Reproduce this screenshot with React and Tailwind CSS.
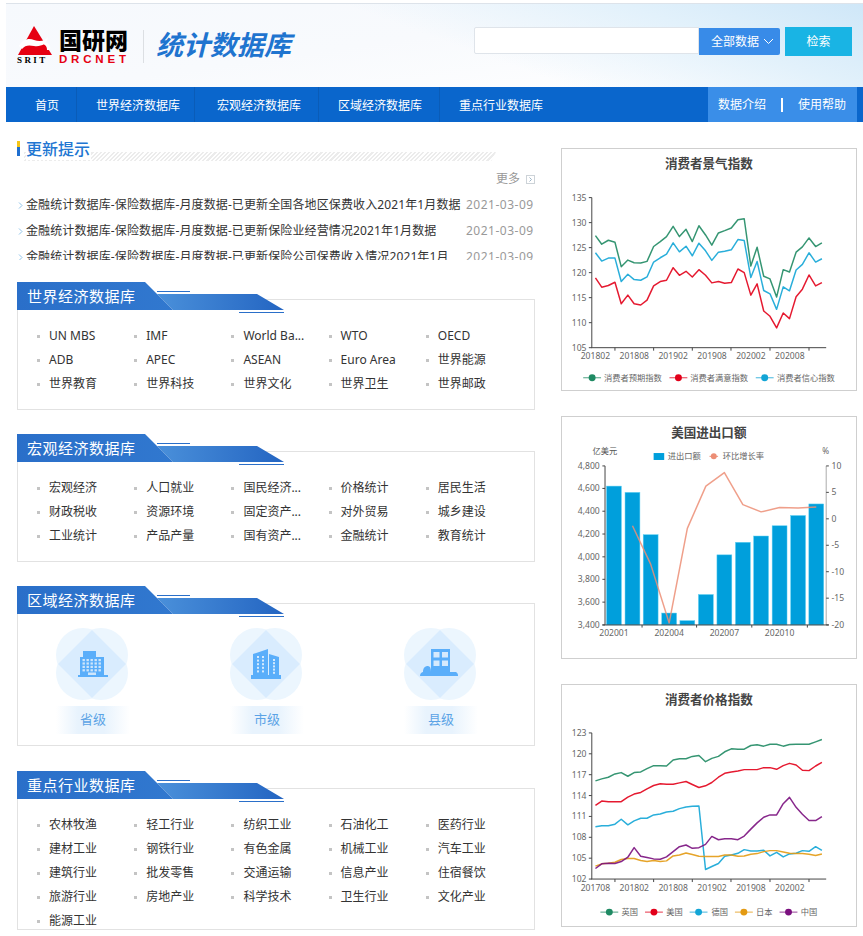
import React from "react";

const FONT = '"Noto Sans","Noto Sans CJK SC",sans-serif';

const xs36 = [119,138,158,178,197,217,236,256,275,295,315,334,354,373,393,412,432,452,471,491,510,530,550,569,589,608,628,647,667,687,706,726,745,765,785,804];
const toPts = (ys) => ys.map((y, i) => `${xs36[i]},${y}`).join(" ");

const c1 = [
  { c: "#1f8a63", n: "消费者预期指数", lx: 109, tx: 145, y: [270,296,284,290,364,344,352,353,348,303,288,273,242,273,251,288,240,268,299,262,255,247,222,219,362,305,393,401,456,373,380,320,304,277,303,292] },
  { c: "#e2001a", n: "消费者满意指数", lx: 370, tx: 406, y: [398,426,421,411,476,450,476,480,465,422,409,405,367,390,378,395,373,390,413,409,414,412,371,382,450,416,498,514,549,504,521,455,432,389,422,412] },
  { c: "#12a5d6", n: "消费者信心指数", lx: 631, tx: 668, y: [322,347,338,338,409,387,403,405,395,350,337,326,292,319,302,331,293,316,345,320,317,313,282,285,397,348,436,446,493,425,437,374,357,322,350,340] },
];
const c3 = [
  { c: "#1f8a63", n: "英国", lx: 161, tx: 198, y: [303,297,292,282,278,289,278,276,266,257,257,258,240,236,236,229,226,245,235,229,215,206,207,207,196,194,198,192,192,198,193,192,192,192,185,178] },
  { c: "#e2001a", n: "美国", lx: 296, tx: 333, y: [377,364,366,366,366,352,343,338,327,317,312,313,313,309,305,314,323,318,308,292,280,276,273,269,269,269,263,263,268,257,250,255,271,272,258,247] },
  { c: "#12a5d6", n: "德国", lx: 431, tx: 470, y: [442,439,439,434,419,436,424,416,416,406,403,397,395,387,382,380,379,571,562,553,531,527,522,511,515,515,513,530,519,533,524,522,514,516,502,513] },
  { c: "#e39a12", n: "日本", lx: 568, tx: 605, y: [561,554,552,549,541,538,538,544,547,544,547,545,530,527,521,526,531,532,532,532,527,527,531,530,525,523,517,514,514,518,522,523,523,525,529,524] },
  { c: "#7a0f7e", n: "中国", lx: 703, tx: 740, y: [568,554,552,553,547,534,505,531,535,539,540,533,517,502,497,507,505,495,471,481,478,478,481,470,449,430,413,406,406,372,353,383,404,423,423,411] },
];

function Legend({ items, y }) {
  return items.map((s) => (
    <g key={s.n}>
      <line x1={s.lx - 27} x2={s.lx + 27} y1={y} y2={y} stroke={s.c} strokeWidth="3" opacity="0.8" />
      <circle cx={s.lx} cy={y} r="10.5" fill={s.c} />
      <text x={s.tx} y={y + 9} fontSize="25" fill="#666">{s.n}</text>
    </g>
  ));
}

function LineChart({ title, series, top, ticks, xLabels, bottom, vb, titleY }) {
  const step = (bottom - top) / (ticks.length - 1);
  return (
    <svg viewBox={vb} className="block w-full h-full" style={{ fontFamily: FONT }}>
      <text x="462" y={titleY} textAnchor="middle" fontSize="38" fontWeight="700" fill="#444">{title}</text>
      <line x1="108" x2="108" y1={top} y2={bottom} stroke="#444" strokeWidth="3" />
      <line x1="106" x2="817" y1={bottom} y2={bottom} stroke="#444" strokeWidth="3" />
      {ticks.map((t, i) => (
        <g key={t}>
          <line x1="99" x2="108" y1={top + i * step} y2={top + i * step} stroke="#444" strokeWidth="3" />
          <text x="92" y={top + i * step + 9} textAnchor="end" fontSize="26" fill="#666">{t}</text>
        </g>
      ))}
      {[178,295,412,529,647,765].map((x) => (
        <line key={x} x1={x} x2={x} y1={bottom} y2={bottom + 9} stroke="#444" strokeWidth="3" />
      ))}
      {xLabels.map((l, i) => (
        <text key={l} x={119 + i * 117.6} y={bottom + 35} textAnchor="middle" fontSize="26" fill="#666">{l}</text>
      ))}
      {series.map((s) => (
        <polyline key={s.n} points={toPts(s.y)} fill="none" stroke={s.c} strokeWidth="4.5" strokeLinejoin="round" opacity="0.9" />
      ))}
      <Legend items={series} y={700} />
    </svg>
  );
}

function BarChart() {
  const left = [161,229,298,367,436,504,573,642];
  const lLab = ["4,800","4,600","4,400","4,200","4,000","3,800","3,600","3,400"];
  const right = [161,241,321,401,481,561,642];
  const rLab = ["10","5","0","-5","-10","-15","-20"];
  const tops = [222,241,369,606,629,550,430,392,373,342,311,276];
  const cx = [175,231,286,342,397,453,509,565,620,676,732,787];
  const line = "231,342 286,458 342,636 397,350 453,222 509,181 565,278 620,300 676,287 732,288 787,285";
  return (
    <svg viewBox="20 13 885 729" className="block w-full h-full" style={{ fontFamily: FONT }}>
      <text x="462" y="73" textAnchor="middle" fontSize="38" fontWeight="700" fill="#444">美国进出口额</text>
      <rect x="295" y="122" width="32" height="21" fill="#009fdc" />
      <text x="338" y="141" fontSize="25" fill="#666">进出口额</text>
      <line x1="464" x2="490" y1="132" y2="132" stroke="#ec8e75" strokeWidth="3" />
      <circle cx="477" cy="132" r="9" fill="#ec8e75" />
      <text x="504" y="141" fontSize="25" fill="#666">环比增长率</text>
      <text x="110" y="124" fontSize="25" fill="#555">亿美元</text>
      <text x="805" y="124" fontSize="25" fill="#666">%</text>
      {cx.map((x, i) => (
        <rect key={x} x={x - 22.5} y={tops[i]} width="45" height={642 - tops[i]} fill="#009fdc" stroke="#5fd0f2" strokeWidth="1.5" />
      ))}
      <line x1="148" x2="148" y1="161" y2="642" stroke="#444" strokeWidth="3" />
      <line x1="817" x2="817" y1="161" y2="642" stroke="#aaa" strokeWidth="3" />
      <line x1="140" x2="825" y1="642" y2="642" stroke="#444" strokeWidth="3" />
      {left.map((y, i) => (
        <g key={y}>
          <line x1="140" x2="148" y1={y} y2={y} stroke="#444" strokeWidth="3" />
          <text x="132" y={y + 9} textAnchor="end" fontSize="26" fill="#666">{lLab[i]}</text>
        </g>
      ))}
      {right.map((y, i) => (
        <g key={y}>
          <line x1="817" x2="825" y1={y} y2={y} stroke="#444" strokeWidth="3" />
          <text x="833" y={y + 9} fontSize="26" fill="#666">{rLab[i]}</text>
        </g>
      ))}
      {[260,425,592,760].map((x) => (
        <line key={x} x1={x} x2={x} y1="642" y2="650" stroke="#444" strokeWidth="3" />
      ))}
      {["202001","202004","202007","202010"].map((l, i) => (
        <text key={l} x={175 + i * 167} y="677" textAnchor="middle" fontSize="26" fill="#666">{l}</text>
      ))}
      <polyline points={line} fill="none" stroke="#ec8e75" strokeWidth="4.5" strokeLinejoin="round" opacity="0.85" />
    </svg>
  );
}

function Ribbon({ title }) {
  return (
    <div className="absolute top-0 left-0 w-[270px] h-[32px]">
      <svg width="270" height="32" viewBox="0 0 270 32" className="absolute top-0 left-0">
        <defs>
          <linearGradient id="rbA" x1="0" x2="1" y1="0" y2="0">
            <stop offset="0" stopColor="#2a6fc9" />
            <stop offset="1" stopColor="#3178cf" />
          </linearGradient>
          <linearGradient id="rbB" x1="0" x2="1" y1="0" y2="0">
            <stop offset="0" stopColor="#4a90da" />
            <stop offset="1" stopColor="#2465c2" />
          </linearGradient>
        </defs>
        <polygon points="140,12 240,12 267,28 156,28" fill="url(#rbB)" />
        <polygon points="0,0 128,0 156,28 0,28" fill="url(#rbA)" />
        <line x1="140" x2="173" y1="9.5" y2="9.5" stroke="#2a6fc9" />
        <line x1="222" x2="267" y1="30.5" y2="30.5" stroke="#2a6fc9" />
      </svg>
      <div className="absolute left-[10px] top-0 h-[28px] leading-[28px] text-[15px] tracking-[0.5px] text-white whitespace-nowrap">{title}</div>
    </div>
  );
}

function Section({ title, children, boxClass, className }) {
  return (
    <section className={`relative pt-[17px] ${className}`}>
      <div className={`border border-[#e2e2e2] bg-white ${boxClass}`}>{children}</div>
      <Ribbon title={title} />
    </section>
  );
}

function Links({ items }) {
  return (
    <div className="grid grid-cols-5 w-[486px] ml-[19px] pt-[24px]">
      {items.map((t) => (
        <div key={t} className="flex items-center h-[24px] text-[12px] text-[#333] whitespace-nowrap">
          <span className="w-[3px] h-[3px] bg-[#c4c4c4] mr-[9px] shrink-0"></span>
          {t}
        </div>
      ))}
    </div>
  );
}

function Blob({ children }) {
  return (
    <svg width="72" height="72" viewBox="0 0 72 72" className="block -ml-[2px]">
      <g fill="#ecf6fe">
        <circle cx="27" cy="27" r="27" />
        <circle cx="45" cy="27" r="27" />
        <circle cx="27" cy="45" r="27" />
        <circle cx="45" cy="45" r="27" />
      </g>
      <polygon points="36,2 70,36 36,70 2,36" fill="#d9ecfe" />
      {children}
    </svg>
  );
}

const ICON = "#5aaefa";

function Level({ name, children }) {
  return (
    <div className="w-[74px] flex flex-col items-center">
      <Blob>{children}</Blob>
      <div className="mt-[6px] w-[74px] h-[28px] leading-[27px] text-center text-[13px] text-[#5ba3e6] bg-[linear-gradient(90deg,#ffffff_0%,#e8f3fd_30%,#e8f3fd_65%,#ffffff_100%)]">
        {name}
      </div>
    </div>
  );
}

const world = ["UN MBS","IMF","World Ba...","WTO","OECD","ADB","APEC","ASEAN","Euro Area","世界能源","世界教育","世界科技","世界文化","世界卫生","世界邮政"];
const macro = ["宏观经济","人口就业","国民经济...","价格统计","居民生活","财政税收","资源环境","固定资产...","对外贸易","城乡建设","工业统计","产品产量","国有资产...","金融统计","教育统计"];
const industry = ["农林牧渔","轻工行业","纺织工业","石油化工","医药行业","建材工业","钢铁行业","有色金属","机械工业","汽车工业","建筑行业","批发零售","交通运输","信息产业","住宿餐饮","旅游行业","房地产业","科学技术","卫生行业","文化产业","能源工业"];
const news = [
  "金融统计数据库-保险数据库-月度数据-已更新全国各地区保费收入2021年1月数据",
  "金融统计数据库-保险数据库-月度数据-已更新保险业经营情况2021年1月数据",
  "金融统计数据库-保险数据库-月度数据-已更新保险公司保费收入情况2021年1月",
];

function Card({ children, className }) {
  return <div className={`w-[296px] h-[243px] border border-[#cfcfcf] bg-white ${className}`}>{children}</div>;
}

export default function App() {
  return (
    <div className="relative w-[863px] h-[936px] overflow-hidden bg-white" style={{ fontFamily: FONT }}>
      <div className="pt-[3px] pl-[6px]">
        <header className="flex h-[84px] border-t border-[#dde3ea] bg-[linear-gradient(172deg,#f6f9fd_0%,#f8fafd_45%,#ffffff_95%)] relative overflow-hidden">
          <div className="absolute inset-0 bg-[linear-gradient(200deg,#cfe7f8_0%,#e2f1fb_22%,rgba(255,255,255,0)_48%)]"></div>
          <div className="relative flex items-start ml-[11px] pt-[22px]">
            <div className="w-[36px]">
              <svg width="36" height="30" viewBox="0 0 36 30" className="block">
                <polygon points="17,0 35,29 1,29" fill="#e60012" />
                <path d="M2 20 C6 13 12 12 17 14 C23 16 28 15 31 11 C30 18 24 21 17 20 C12 19 8 19 5 23 Z" fill="#fff" />
                <path d="M27 16 C32 17 34 20 33 24 L30 24 C30 21 29 19 26 18 Z" fill="#fff" />
              </svg>
              <div className="text-[9px] leading-[9px] font-bold text-black tracking-[2.4px] whitespace-nowrap" style={{ fontFamily: '"Liberation Serif",serif' }}>SRIT</div>
            </div>
            <div className="ml-[6px] w-[72px] pt-[1px]">
              <div className="text-[23px] leading-[27px] font-black text-black whitespace-nowrap">国研网</div>
              <div className="text-[11.5px] leading-[11px] font-bold text-[#e60012] tracking-[3.8px] whitespace-nowrap" style={{ fontFamily: '"Liberation Sans",sans-serif' }}>DRCNET</div>
            </div>
            <div className="ml-[12px] mt-[4px] w-[1px] h-[33px] bg-[#dcdfe3]"></div>
            <div className="ml-[12px] mt-[1px] text-[27px] leading-[36px] font-bold italic text-[#1f74cf] whitespace-nowrap">统计数据库</div>
          </div>
          <div className="relative ml-auto mr-[11px] pt-[23px] flex items-start">
            <div className="w-[225px] h-[27px] bg-white border border-[#dfe4ea] rounded-l-[2px]"></div>
            <div className="w-[81px] h-[27px] mt-[1px] bg-[#388be8] rounded-r-[2px] text-white text-[12px] flex items-center pl-[12px]">
              全部数据
              <svg width="11" height="7" viewBox="0 0 11 7" className="ml-[4px]"><path d="M1 1 L5.5 5.5 L10 1" fill="none" stroke="#fff" strokeWidth="1" /></svg>
            </div>
            <div className="ml-[5px] w-[67px] h-[29px] bg-[#19b4e4] text-white text-[12px] flex items-center justify-center">检索</div>
          </div>
        </header>
        <nav className="flex h-[35px] bg-[#0a66cc] text-white text-[12px] leading-[37px] whitespace-nowrap">
          <div className="w-[71px] pl-[29px] border-r border-[#0a5cb8]">首页</div>
          <div className="w-[118px] pl-[19px] border-r border-[#0a5cb8]">世界经济数据库</div>
          <div className="w-[124px] pl-[22px] border-r border-[#0a5cb8]">宏观经济数据库</div>
          <div className="w-[121px] pl-[19px] border-r border-[#0a5cb8]">区域经济数据库</div>
          <div className="w-[268px] pl-[19px]">重点行业数据库</div>
          <div className="w-[149px] bg-[#3a8ee8] pl-[10px] flex items-center">
            <span>数据介绍</span>
            <span className="ml-[15px] mr-[15px] w-[2px] h-[14px] bg-white"></span>
            <span>使用帮助</span>
          </div>
        </nav>
      </div>

      <main className="flex pl-[17px]">
        <div className="w-[518px]">
          <div className="relative mt-[19px] h-[21px]">
            <div className="absolute left-[7px] top-[11px] w-[472px] h-[9px] bg-[repeating-linear-gradient(135deg,#ececec_0px,#ececec_1.5px,#ffffff_1.5px,#ffffff_3px)] [clip-path:polygon(0_0,100%_0,99%_100%,0_100%)]"></div>
            <div className="absolute left-0 top-0 w-[3px] h-[15px] bg-[linear-gradient(180deg,#f5c518_0%,#f5c518_40%,#1f6fd0_40%,#1f6fd0_100%)]"></div>
            <div className="absolute left-[9px] top-[-3px] bg-white pr-[1px] text-[16px] leading-[22px] font-medium text-[#2176d2] whitespace-nowrap">更新提示</div>
          </div>
          <div className="flex justify-end items-center h-[16px] mt-[9px] text-[12px] text-[#999]">
            <span>更多</span>
            <svg width="9" height="9" viewBox="0 0 9 9" className="ml-[6px]">
              <rect x="0.5" y="0.5" width="8" height="8" fill="none" stroke="#cdd3d8" />
              <path d="M3.5 2.5 L5.5 4.5 L3.5 6.5" fill="none" stroke="#9db4c6" />
            </svg>
          </div>
          <ul className="mt-[5px] h-[68px] overflow-hidden text-[12px]">
            {news.map((n) => (
              <li key={n} className="flex items-center h-[26px] whitespace-nowrap">
                <svg width="5" height="7" viewBox="0 0 5 7" className="ml-[1px] mr-[3px] shrink-0"><path d="M1 0.5 L4 3.5 L1 6.5" fill="none" stroke="#8fc3e8" /></svg>
                <span className="w-[440px] text-[#333] tracking-[0.12px]">{n}</span>
                <span className="text-[#999] tracking-[0.5px]">2021-03-09</span>
              </li>
            ))}
          </ul>

          <Section title="世界经济数据库" boxClass="h-[111px]" className="mt-[22px] mb-[24px]">
            <Links items={world} />
          </Section>
          <Section title="宏观经济数据库" boxClass="h-[111px]" className="mb-[24px]">
            <Links items={macro} />
          </Section>
          <Section title="区域经济数据库" boxClass="h-[143px]" className="mb-[25px]">
            <div className="flex gap-[100px] pl-[38px] pt-[24px]">
              <Level name="省级">
                <g fill={ICON}>
                  <path d="M27 23 H40 V29 H48 V47 H52 V49 H22 V47 H24 V29 H27 Z" />
                </g>
                <g fill="#cfe6fb">
                  {[0,1,2,3].map((r) => [0,1,2,3,4].map((c) => (
                    <rect key={`${r}${c}`} x={26.5 + c * 4} y={31 + r * 3.4} width="2.4" height="2.2" />
                  )))}
                  <rect x="32" y="44.5" width="8" height="2.5" />
                </g>
              </Level>
              <Level name="市级">
                <g fill={ICON}>
                  <path d="M23 26 L38 21 V48 H23 Z" />
                  <path d="M39 26 L49 29 V48 H39 Z" />
                  <rect x="21" y="47" width="30" height="4" />
                </g>
                <g fill="#d6eafd">
                  {[0,1,2,3,4].map((r) => (
                    <g key={r}>
                      <rect x="27" y={28 + r * 3.6} width="2" height="2" />
                      <rect x="32" y={28 + r * 3.6} width="2" height="2" />
                      <rect x="43" y={31 + r * 3.2} width="2" height="2" />
                    </g>
                  ))}
                </g>
              </Level>
              <Level name="县级">
                <g fill={ICON}>
                  <rect x="27" y="21" width="19" height="24" />
                  <path d="M16 48 C16 45 18 44 19 44 C19 40 21 38 24 38 C26 38 27 40 27 44 H52 C54 45 54 47 54 48 Z" />
                </g>
                <g fill="#d6eafd">
                  <rect x="29.5" y="24" width="6" height="5.5" />
                  <rect x="38" y="24" width="6" height="5.5" />
                  <rect x="29.5" y="32.5" width="6" height="5.5" />
                  <rect x="38" y="32.5" width="6" height="5.5" />
                </g>
              </Level>
            </div>
          </Section>
          <Section title="重点行业数据库" boxClass="h-[142px]">
            <Links items={industry} />
          </Section>
        </div>

        <aside className="ml-[26px] pt-[26px] flex flex-col gap-[25px]">
          <Card>
            <LineChart title="消费者景气指数" series={c1} top={155} bottom={609} vb="20 8 885 729" titleY={65}
              ticks={["135","130","125","120","115","110","105"]}
              xLabels={["201802","201808","201902","201908","202002","202008"]} />
          </Card>
          <Card><BarChart /></Card>
          <Card>
            <LineChart title="消费者价格指数" series={c3} top={158} bottom={600} vb="20 13 885 729" titleY={71}
              ticks={["123","120","117","114","111","108","105","102"]}
              xLabels={["201708","201802","201808","201902","201908","202002"]} />
          </Card>
        </aside>
      </main>
    </div>
  );
}
